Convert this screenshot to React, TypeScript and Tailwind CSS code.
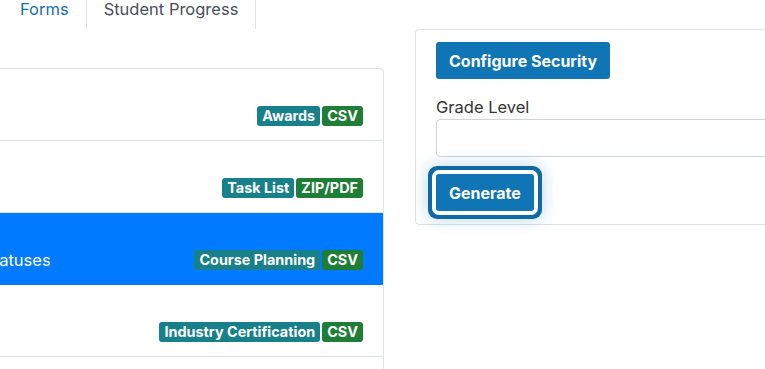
import React from "react";

interface ReportRow {
  id: number;
  description: string;
  category: string;
  format: string;
  active?: boolean;
}

const rows: ReportRow[] = [
  { id: 1, description: "", category: "Awards", format: "CSV" },
  { id: 2, description: "", category: "Task List", format: "ZIP/PDF" },
  { id: 3, description: "Course Request Statuses", category: "Course Planning", format: "CSV", active: true },
  { id: 4, description: "", category: "Industry Certification", format: "CSV" },
  { id: 5, description: "", category: "", format: "" },
];

function Badge({ label, tone }: { label: string; tone: "teal" | "green" }) {
  return (
    <span
      className={`inline-flex h-[20px] items-center rounded-[3px] px-[5px] text-[14.4px] font-bold leading-none text-white ${
        tone === "teal" ? "bg-[#17808b]" : "bg-[#1f7e35]"
      }`}
    >
      {label}
    </span>
  );
}

export default function App() {
  return (
    <div className="h-[369px] w-[765px] overflow-hidden bg-white font-['Inter',sans-serif] text-[#333]">
      {/* tabs, top part scrolled off */}
      <nav className="-mt-[11px] flex h-[40px] pl-[3px] text-[16.5px]">
        <a className="flex items-center border border-transparent px-4 text-[#1a6fa8]">Forms</a>
        <a className="flex items-center border-x border-[#dee2e6] px-[17px] text-[#495057]">Student Progress</a>
      </nav>

      <div className="flex items-start gap-[31px]">
        <div className="w-[384px] shrink-0 pt-[39px]">
          <ul className="-ml-[167px] w-[551px] rounded-tr-[4px] border border-[#dee2e6]">
            {rows.map((row) => (
              <li
                key={row.id}
                className={`flex h-[72px] items-center justify-between border-b px-5 pt-[23px] text-[16.5px] ${
                  row.active ? "border-[#007bff] bg-[#007bff] text-white" : "border-[#dee2e6]"
                }`}
              >
                <span>{row.description}</span>
                {row.category && (
                  <span className="flex gap-[2px]">
                    <Badge label={row.category} tone="teal" />
                    <Badge label={row.format} tone="green" />
                  </span>
                )}
              </li>
            ))}
          </ul>
        </div>

        <div className="w-[420px] shrink-0 rounded-[4px] border border-[#dee2e6] px-5 pb-[13px] pt-3">
          <button className="h-[37px] rounded-[3px] bg-[#1075b4] px-[13px] text-[16px] font-bold text-white">
            Configure Security
          </button>
          <label className="mt-4 block text-[16.5px] leading-6 text-[#333]">Grade Level</label>
          <input className="block h-[38px] w-full rounded-[4px] border border-[#ced4da]" />
          <button className="mt-[17px] h-[37px] rounded-[3px] bg-[#1075b4] px-[13px] text-[16px] font-bold text-white shadow-[0_0_0_4px_#fff,0_0_0_8px_#0f6aa3,0_0_16px_8px_rgba(16,117,180,0.3)]">
            Generate
          </button>
        </div>
      </div>
    </div>
  );
}
